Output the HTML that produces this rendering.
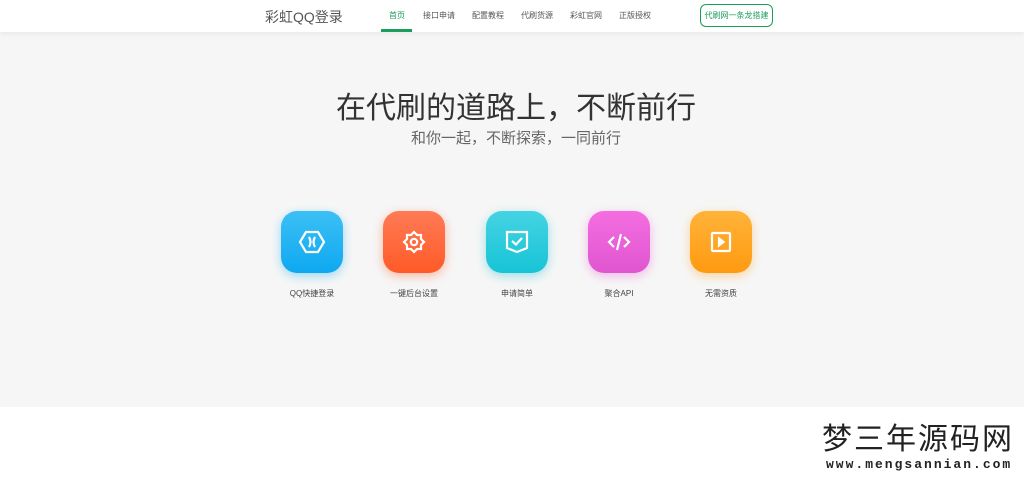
<!DOCTYPE html>
<html><head><meta charset="utf-8"><style>
*{margin:0;padding:0;box-sizing:border-box}
body{width:1024px;height:479px;overflow:hidden;background:#fff;font-family:"Liberation Sans","Noto Sans CJK SC",sans-serif;position:relative}
.nav{position:absolute;top:0;left:0;width:1024px;height:32px;background:#fff;box-shadow:0 2px 6px rgba(0,0,0,.06);z-index:2}
.logo{position:absolute;left:265px;top:7px;font-size:14px;color:#555}
.nav a{position:absolute;top:10px;font-size:8px;color:#555;text-decoration:none}
.act{color:#1a9e5c!important}
.bar{position:absolute;left:381px;top:29px;width:31px;height:3px;background:#1a9e5c}
.btn{position:absolute;left:700px;top:4px;width:73px;height:23px;border:1px solid #1a9e5c;border-radius:6px;font-size:8px;color:#1a9e5c;text-align:center;line-height:21px}
.hero{position:absolute;top:32px;left:0;width:1024px;height:375px;background:#f6f6f6}
h1{position:absolute;top:83px;left:0;width:1032px;text-align:center;font-weight:normal;font-size:30px;color:#333}
h2{position:absolute;top:127px;left:0;width:1032px;text-align:center;font-weight:normal;font-size:15px;color:#666}
.it{position:absolute;top:211px;width:62px;text-align:center}
.ic{width:62px;height:62px;border-radius:16px;display:flex;align-items:center;justify-content:center}
.it p{position:absolute;top:77px;left:-30px;width:122px;font-size:8px;color:#444}
.wm{position:absolute;left:822px;top:421px;font-size:30px;color:#222;font-family:"Noto Sans CJK SC",sans-serif;line-height:1;letter-spacing:2px;white-space:nowrap}
.wm2{position:absolute;left:826px;top:457px;font-size:13px;font-family:"Liberation Mono",monospace;font-weight:bold;color:#222;letter-spacing:2px;white-space:nowrap}
</style></head><body>
<div class="nav">
<div class="logo">彩虹QQ登录</div>
<a class="act" style="left:389px">首页</a>
<a style="left:423px">接口申请</a>
<a style="left:472px">配置教程</a>
<a style="left:521px">代刷货源</a>
<a style="left:570px">彩虹官网</a>
<a style="left:619px">正版授权</a>
<div class="bar"></div>
<div class="btn">代刷网一条龙搭建</div>
</div>
<div class="hero"></div>
<h1>在代刷的道路上，不断前行</h1>
<h2>和你一起，不断探索，一同前行</h2>
<div class="it" style="left:281px"><div class="ic" style="background:linear-gradient(#3cc0f5,#0ea8f0);box-shadow:0 3px 10px rgba(20,170,240,.4)"><svg width="30" height="30" viewBox="0 0 30 30" fill="none" stroke="#fff" stroke-width="2.2"><path d="M9 5h12l6 10-6 10H9L3 15z"/><path d="M12 10q3 5 0 10M18 10q-3 5 0 10"/></svg></div><p>QQ快捷登录</p></div>
<div class="it" style="left:383px"><div class="ic" style="background:linear-gradient(#ff7b55,#ff5a28);box-shadow:0 3px 10px rgba(255,90,40,.4)"><svg width="30" height="30" viewBox="0 0 30 30" fill="none" stroke="#fff" stroke-width="2.2"><path d="M15 5l3 3 4 0 0 4 3 3-3 3 0 4-4 0-3 3-3-3-4 0 0-4-3-3 3-3 0-4 4 0z"/><circle cx="15" cy="15" r="3.2"/></svg></div><p>一键后台设置</p></div>
<div class="it" style="left:486px"><div class="ic" style="background:linear-gradient(#45d3e3,#16c4d6);box-shadow:0 3px 10px rgba(20,190,210,.4)"><svg width="30" height="30" viewBox="0 0 30 30" fill="none" stroke="#fff" stroke-width="2.2"><path d="M5 5h20v16l-10 4-10-4z"/><path d="M10 14l4 3.5 6-6.5"/></svg></div><p>申请简单</p></div>
<div class="it" style="left:588px"><div class="ic" style="background:linear-gradient(#f46ee0,#e055d0);box-shadow:0 3px 10px rgba(230,90,210,.4)"><svg width="30" height="30" viewBox="0 0 30 30" fill="none" stroke="#fff" stroke-width="2.2"><path d="M10 10l-5 5 5 5M20 10l5 5-5 5M17 7l-4 16"/></svg></div><p>聚合API</p></div>
<div class="it" style="left:690px"><div class="ic" style="background:linear-gradient(#ffb33a,#ff9a10);box-shadow:0 3px 10px rgba(255,160,30,.4)"><svg width="30" height="30" viewBox="0 0 30 30" fill="none" stroke="#fff" stroke-width="2.2"><rect x="6" y="6" width="18" height="18" rx="1"/><path d="M13 11.5l4.5 3.5-4.5 3.5z" fill="#fff"/></svg></div><p>无需资质</p></div>
<div class="wm">梦三年源码网</div>
<div class="wm2">www.mengsannian.com</div>
</body></html>
